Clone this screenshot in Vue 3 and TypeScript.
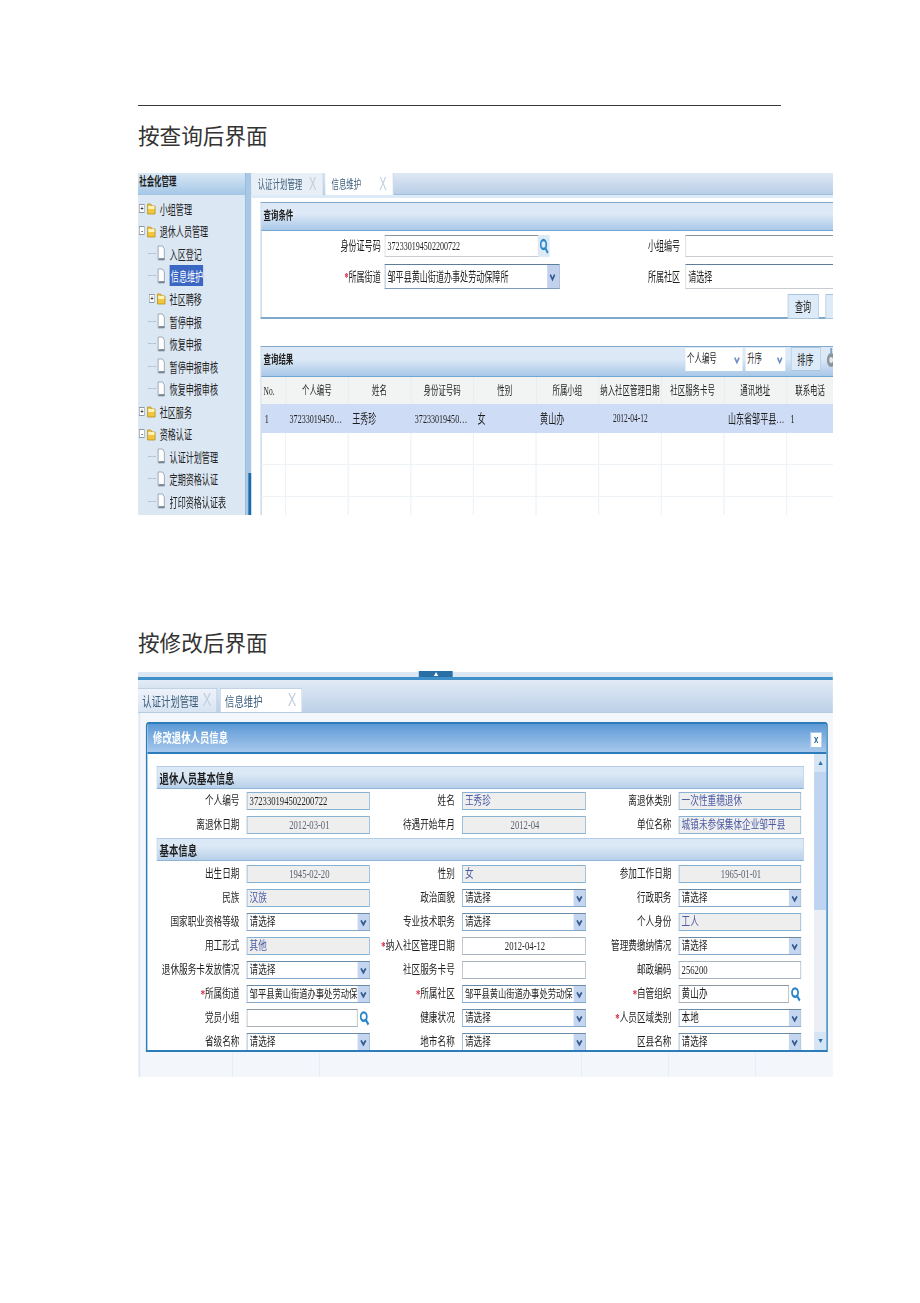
<script setup lang="ts">
type Tree = { t: string; d: number; k: 'folder' | 'page'; e?: string; sel?: boolean }
type Field = { l: string; v?: string; k: 'ro' | 'roc' | 'sel' | 'txt' | 'txc' | 'look'; req?: boolean; blue?: boolean }

const tree: Tree[] = [
  { t: '小组管理', d: 0, k: 'folder', e: '+' },
  { t: '退休人员管理', d: 0, k: 'folder', e: '-' },
  { t: '入区登记', d: 1, k: 'page' },
  { t: '信息维护', d: 1, k: 'page', sel: true },
  { t: '社区聘移', d: 1, k: 'folder', e: '+' },
  { t: '暂停申报', d: 1, k: 'page' },
  { t: '恢复申报', d: 1, k: 'page' },
  { t: '暂停申报审核', d: 1, k: 'page' },
  { t: '恢复申报审核', d: 1, k: 'page' },
  { t: '社区服务', d: 0, k: 'folder', e: '+' },
  { t: '资格认证', d: 0, k: 'folder', e: '-' },
  { t: '认证计划管理', d: 1, k: 'page' },
  { t: '定期资格认证', d: 1, k: 'page' },
  { t: '打印资格认证表', d: 1, k: 'page' }
]

const heads = ['No.', '个人编号', '姓名', '身份证号码', '性别', '所属小组', '纳入社区管理日期', '社区服务卡号', '通讯地址', '联系电话']
const row = ['1', '37233019450…', '王秀珍', '37233019450…', '女', '黄山办', '2012-04-12', '', '山东省邹平县…', '1']
const rowAlign = ['l', 'l', 'l', 'l', 'l', 'l', 'c', 'l', 'l', 'l']

const sec1: Field[] = [
  { l: '个人编号', v: '372330194502200722', k: 'ro' },
  { l: '姓名', v: '王秀珍', k: 'ro', blue: true },
  { l: '离退休类别', v: '一次性重穗退休', k: 'ro', blue: true },
  { l: '离退休日期', v: '2012-03-01', k: 'roc' },
  { l: '待遇开始年月', v: '2012-04', k: 'roc' },
  { l: '单位名称', v: '城镇未参保集体企业邹平县', k: 'ro', blue: true }
]
const pick = '请选择'
const street = '邹平县黄山街道办事处劳动保'
const sec2: Field[] = [
  { l: '出生日期', v: '1945-02-20', k: 'roc' },
  { l: '性别', v: '女', k: 'ro', blue: true },
  { l: '参加工作日期', v: '1965-01-01', k: 'roc' },
  { l: '民族', v: '汉族', k: 'ro', blue: true },
  { l: '政治面貌', v: pick, k: 'sel' },
  { l: '行政职务', v: pick, k: 'sel' },
  { l: '国家职业资格等级', v: pick, k: 'sel' },
  { l: '专业技术职务', v: pick, k: 'sel' },
  { l: '个人身份', v: '工人', k: 'ro', blue: true },
  { l: '用工形式', v: '其他', k: 'ro', blue: true },
  { l: '纳入社区管理日期', v: '2012-04-12', k: 'txc', req: true },
  { l: '管理费缴纳情况', v: pick, k: 'sel' },
  { l: '退休服务卡发放情况', v: pick, k: 'sel' },
  { l: '社区服务卡号', v: '', k: 'txt' },
  { l: '邮政编码', v: '256200', k: 'txt' },
  { l: '所属街道', v: street, k: 'sel', req: true },
  { l: '所属社区', v: street, k: 'sel', req: true },
  { l: '自管组织', v: '黄山办', k: 'look', req: true },
  { l: '党员小组', v: '', k: 'look' },
  { l: '健康状况', v: pick, k: 'sel' },
  { l: '人员区域类别', v: '本地', k: 'sel', req: true },
  { l: '省级名称', v: pick, k: 'sel' },
  { l: '地市名称', v: pick, k: 'sel' },
  { l: '区县名称', v: pick, k: 'sel' }
]
const sections: { title: string; fields: Field[] }[] = [
  { title: '退休人员基本信息', fields: sec1 },
  { title: '基本信息', fields: sec2 }
]
</script>

<template>
  <div class="page">
    <div class="rule"></div>
    <h2 class="h h1">按查询后界面</h2>

    <section class="shot s1">
      <div class="canvas c1">
        <aside class="side">
          <div class="side-head">社会化管理</div>
          <div class="tree">
            <div v-for="n in tree" :key="n.t" class="node" :class="{ deep: n.d === 1 }">
              <span class="exp">
                <i v-if="n.e" class="box">{{ n.e }}</i>
                <i v-else class="dash"></i>
              </span>
              <svg class="ico" viewBox="0 0 16 16">
                <template v-if="n.k === 'folder'">
                  <path d="M2 4h5l2 2h5v8H2z" fill="#f1c63c" stroke="#b98f1e" />
                  <path d="M3 6h10v3H3z" fill="#fff3b8" />
                </template>
                <template v-else>
                  <path d="M3 1h7l3 3v11H3z" fill="#fff" stroke="#8d9aa8" />
                  <path d="M4 14h9" stroke="#5c6b7a" stroke-width="1.6" />
                </template>
              </svg>
              <span class="ntext" :class="{ sel: n.sel }">{{ n.t }}</span>
            </div>
          </div>
        </aside>
        <div class="split"><i class="split-dark"></i></div>
        <main class="main">
          <div class="tabs tabs1">
            <div class="tab off">认证计划管理<b>X</b></div>
            <div class="tab on">信息维护<b>X</b></div>
          </div>
          <div class="panel query">
            <div class="phead">查询条件</div>
            <div class="qform">
              <label>身份证号码</label>
              <div class="qlook">
                <div class="inp q">372330194502200722</div>
                <span class="lens-box">
                  <svg class="lens" viewBox="0 0 16 16"><circle cx="7" cy="6.5" r="4.5" fill="none" stroke="#2a86c8" stroke-width="2.6" /><path d="M10 10l4 5" stroke="#2a86c8" stroke-width="2.8" /></svg>
                </span>
              </div>
              <label>小组编号</label>
              <div class="inp q"></div>
              <label class="tall"><em>*</em>所属街道</label>
              <div class="inp q tall sel1">
                <span>邹平县黄山街道办事处劳动保障所</span>
                <i class="arrow"><svg viewBox="0 0 10 10"><path d="M2 3l3 4 3-4" fill="none" stroke="#345a92" stroke-width="2" /></svg></i>
              </div>
              <label class="tall">所属社区</label>
              <div class="inp q tall">请选择</div>
            </div>
            <div class="qbtns">
              <div class="btn">查询</div>
              <div class="btn"></div>
            </div>
          </div>

          <div class="panel result">
            <div class="phead rhead">
              <span class="rtitle">查询结果</span>
              <div class="mini w1">个人编号<i class="marrow"><svg viewBox="0 0 10 10"><path d="M2 3l3 4 3-4" fill="none" stroke="#6f8fc4" stroke-width="2" /></svg></i></div>
              <div class="mini w2">升序<i class="marrow"><svg viewBox="0 0 10 10"><path d="M2 3l3 4 3-4" fill="none" stroke="#6f8fc4" stroke-width="2" /></svg></i></div>
              <div class="btn sort">排序</div>
              <svg class="gear" viewBox="0 0 16 22"><circle cx="8" cy="13" r="7" fill="#8c949c" /><circle cx="8" cy="13" r="3" fill="#e4e8ec" /><path d="M8 1v6" stroke="#7fa4c8" stroke-width="3" /></svg>
            </div>
            <div class="grid ghead">
              <div v-for="h in heads" :key="h" class="gc hc">{{ h }}</div>
            </div>
            <div class="grid grow hl">
              <div v-for="(c, i) in row" :key="i" class="gc" :class="rowAlign[i]">{{ c }}</div>
            </div>
            <div v-for="r in 3" :key="r" class="grid grow blank">
              <div v-for="h in heads" :key="h" class="gc"></div>
            </div>
          </div>
        </main>
      </div>
    </section>

    <h2 class="h h2">按修改后界面</h2>

    <section class="shot s2">
      <div class="canvas c2">
        <div class="strip"><i class="handle"><b></b></i></div>
        <div class="tabs tabs2">
          <div class="tab off">认证计划管理<b>X</b></div>
          <div class="tab on">信息维护<b>X</b></div>
        </div>
        <div class="stage">
          <div class="dialog">
            <div class="dhead">
              <span>修改退休人员信息</span>
              <i class="close">x</i>
            </div>
            <div class="dbody">
              <div class="dscroll">
                <template v-for="s in sections" :key="s.title">
                  <div class="sect">{{ s.title }}</div>
                  <div class="fgrid">
                    <template v-for="f in s.fields" :key="f.l">
                      <label class="flab"><em v-if="f.req">*</em>{{ f.l }}</label>
                      <div v-if="f.k === 'look'" class="flook">
                        <div class="fld txt">{{ f.v }}</div>
                        <svg class="flens" viewBox="0 0 16 16"><circle cx="7" cy="6.5" r="4.5" fill="none" stroke="#2a86c8" stroke-width="2.6" /><path d="M10 10l4 5" stroke="#2a86c8" stroke-width="2.8" /></svg>
                      </div>
                      <div v-else class="fld" :class="[f.k, { blue: f.blue, long: f.v === street }]">
                        <span>{{ f.v }}</span>
                        <i v-if="f.k === 'sel'" class="farrow"><svg viewBox="0 0 10 10"><path d="M2 3l3 4 3-4" fill="none" stroke="#345a92" stroke-width="2" /></svg></i>
                      </div>
                    </template>
                  </div>
                </template>
              </div>
              <div class="sbar">
                <i class="sbtn"><svg viewBox="0 0 10 10"><path d="M5 3l3 4H2z" fill="#2a6fa8" /></svg></i>
                <i class="thumb"></i>
                <i class="strack"></i>
                <i class="sbtn"><svg viewBox="0 0 10 10"><path d="M5 7L2 3h6z" fill="#2a6fa8" /></svg></i>
              </div>
            </div>
          </div>
          <div class="under"></div>
        </div>
      </div>
    </section>
  </div>
</template>

<style>
html, body { margin: 0; background: #fff; }
</style>

<style scoped>
.page {
  width: 920px;
  min-height: 1303px;
  box-sizing: border-box;
  padding: 105px 0 0 138px;
  background: #fff;
  font-family: "Liberation Serif", "Noto Sans CJK SC", serif;
}
.rule { width: 643px; height: 1px; background: #3a3a3a; }
.h {
  margin: 0;
  font: 400 21.6px/26px "Liberation Serif", "Noto Sans CJK SC", serif;
  color: #333;
}
.h1 { margin: 18px 0 23px; }
.h2 { margin: 116px 0 14px; }

.shot { width: 695px; overflow: hidden; filter: blur(0.6px); color: #1e1e1e; }
.s1 { height: 342px; }
.s2 { height: 406px; }
.canvas { transform-origin: 0 0; font-size: 12px; }
.c1 { width: 1121px; height: 342px; display: flex; transform: scaleX(0.62); }
.c2 { width: 965px; height: 406px; transform: scaleX(0.72); background: #f3f6fb; }

/* sidebar */
.side { width: 173px; flex: none; background: #dbe7f3; }
.side-head {
  height: 22px;
  line-height: 18px;
  padding-left: 2px;
  font-weight: 700;
  background: linear-gradient(#d8e7f5, #a3c6e6);
}
.tree { padding-top: 2px; }
.node { height: 22.55px; display: flex; align-items: center; font-size: 13px; }
.node.deep { padding-left: 16px; }
.exp { width: 13px; display: flex; justify-content: center; flex: none; }
.box {
  width: 9px; height: 9px; box-sizing: border-box;
  border: 1px solid #8a9aaa; background: #fff;
  font: 700 8px/7px "Liberation Sans", sans-serif;
  text-align: center; color: #333;
}
.dash { width: 13px; border-top: 1px dotted #8a9aaa; }
.ico { width: 17px; height: 16px; flex: none; }
.ntext { margin-left: 5px; padding: 1px 3px 1px 0; white-space: nowrap; color: #222; }
.ntext.sel { background: #3a66c4; color: #fff; padding-left: 2px; }

.split { width: 10px; flex: none; background: #a8c8e6; display: flex; flex-direction: column; justify-content: flex-end; align-items: flex-end; border-left: 1px solid #7fb0d8; box-sizing: border-box; }
.split-dark { width: 5px; height: 42px; background: #1f6aa6; }

.main { flex: 1; min-width: 0; background: #fff; }
.tabs { display: flex; align-items: flex-end; white-space: nowrap; }
.tabs1 { height: 22px; background: linear-gradient(#dfe8f4, #b7cde6); border-bottom: 3px solid #dcebf7; box-shadow: inset 0 -1px 0 #9cc0e0; }
.tab { box-sizing: border-box; display: flex; align-items: center; justify-content: space-between; color: #3d5f7c; }
.tab b { font: 400 18px "Liberation Sans", sans-serif; color: #c0cfdd; }
.tabs1 .tab { height: 22px; padding: 0 10px; }
.tabs1 .off { width: 116px; background: #e8eff7; border-right: 1px solid #b0c6dc; }
.tabs1 .on { width: 110px; margin-left: 3px; background: #fff; border-right: 1px solid #b0c6dc; }

.panel { margin-left: 14.5px; border: 1px solid #7ea9cc; border-width: 1px 0 2px 1px; background: #fff; }
.query { margin-top: 4px; height: 114px; }
.phead { height: 27px; line-height: 26px; padding-left: 4px; font-weight: 700; background: linear-gradient(#dde9f6 40%, #a9c8e8); border-bottom: 1px solid #6fa6d2; white-space: nowrap; }
.qform { padding-top: 4px; display: grid; grid-template-columns: 199px 282px 203px 239px; grid-template-rows: 22px 25px; row-gap: 7px; width: 938px; }
.qform label { text-align: right; padding-right: 6px; line-height: 22px; font-size: 13px; }
.qform label:nth-child(3), .qform label:nth-child(7) { padding-right: 8px; }
.qform label.tall { line-height: 25px; }
em { color: #d81e3c; font-style: normal; font-weight: 700; }
.qlook { display: flex; }
.inp { border: 1px solid #c8ccd0; border-top-color: #8b949c; padding-left: 4px; line-height: 20px; box-sizing: border-box; background: #fff; white-space: nowrap; overflow: hidden; font-size: 13px; }
.qlook .inp { width: 248px; flex: none; }
.lens-box { width: 18px; height: 22px; background: #dcebf6; display: flex; align-items: center; justify-content: center; }
.lens { width: 16px; height: 16px; }
.inp.tall { line-height: 23px; border-top-color: #5c7d9c; }
.sel1 { display: flex; justify-content: space-between; padding-right: 0; border-color: #7e9cbc; }
.arrow { width: 19px; background: #c2d2ee; display: flex; align-items: center; flex: none; }
.arrow svg { width: 17px; height: 12px; }
.qbtns { padding: 5px 0 0 849px; display: flex; gap: 11px; }
.btn { width: 50px; height: 25px; box-sizing: border-box; text-align: center; line-height: 24px; font-size: 13px; background: #dcebf7; border: 1px solid #a9c6de; flex: none; }

.result { margin-top: 27px; }
.rhead { height: 29px; display: flex; align-items: flex-start; padding-left: 4px; gap: 5px; }
.rtitle { width: 675px; flex: none; }
.mini { height: 23px; margin-top: 1px; line-height: 22px; background: #fff; font-weight: 400; padding-left: 3px; box-sizing: border-box; display: flex; justify-content: space-between; flex: none; }
.w1 { width: 92px; }
.w2 { width: 64px; }
.marrow { width: 18px; display: flex; align-items: center; }
.marrow svg { width: 18px; height: 12px; }
.sort { width: 48px; height: 24px; margin-left: 4px; font-weight: 400; }
.gear { width: 16px; height: 22px; flex: none; margin-left: 4px; }

.grid { display: grid; grid-template-columns: 40px repeat(8, 101px) 76px; width: 924px; }
.ghead { height: 27px; background: #f2f4f4; }
.hc { text-align: center; line-height: 27px; border-right: 1px solid #e4e8ec; font-size: 12px; }
.hc:first-child { text-align: left; padding-left: 4px; }
.grow { height: 29px; }
.hl { background: #cfdcf5; }
.gc { white-space: nowrap; overflow: hidden; line-height: 29px; box-sizing: border-box; }
.gc.l { padding-left: 6px; font-size: 13px; }
.gc.c { text-align: center; }
.blank { height: 31px; border-bottom: 1px solid #eef3f8; }
.blank .gc { border-right: 2px solid #eef3f8; }

/* second shot */
.strip { height: 9px; border-bottom: 3px solid #3f90c8; background: linear-gradient(#fff 25%, #dbe8f3 25%); box-sizing: border-box; padding-left: 390px; }
.handle { width: 47px; height: 6px; background: #2a6ea6; display: flex; justify-content: center; }
.handle b { width: 0; height: 0; border: 3px solid transparent; border-top: 0; border-bottom: 4px solid #fff; margin-top: 1px; }
.tabs2 { height: 33px; background: linear-gradient(#e2ebf6, #bcd0e8); border-bottom: 1px solid #b5cbe2; box-sizing: border-box; }
.tabs2 .tab { height: 24px; font-size: 13px; padding: 0 7px 0 6px; }
.tabs2 .off { width: 110px; background: linear-gradient(#eef3fa, #d8e4f2); border: 1px solid #c0d2e4; border-bottom: 0; border-left: 0; }
.tabs2 .on { width: 114px; margin-left: 4px; background: #fff; border: 1px solid #c0d2e4; border-bottom: 0; }
.stage { padding: 9px 7px 0 8px; height: 364px; box-sizing: border-box; border-left: 2px solid #dfe8f2; margin-left: 1px; }
.dialog { width: 947px; height: 330px; box-sizing: border-box; border: 2px solid #2b7cb8; border-radius: 4px 4px 0 0; background: #fff; display: flex; flex-direction: column; overflow: hidden; }
.dhead { height: 30px; flex: none; box-sizing: border-box; background: linear-gradient(#5d9ad6, #a7c8ec); border-bottom: 2px solid #2b7cb8; color: #fff; font-weight: 700; font-size: 13px; line-height: 28px; padding-left: 8px; display: flex; justify-content: space-between; }
.close { width: 14px; height: 14px; margin: 8px 6px 0 0; background: #fff; border: 1px solid #a8c4de; color: #23659a; font: 700 11px/12px "Liberation Sans", sans-serif; text-align: center; }
.dbody { flex: 1; min-height: 0; display: flex; }
.dscroll { flex: 1; min-width: 0; padding: 12px 0 0 13px; overflow: hidden; }
.sect { width: 899px; height: 23px; box-sizing: border-box; line-height: 24px; padding-left: 3px; font-weight: 700; font-size: 13px; background: linear-gradient(#dbe8f5 35%, #b6d0ea); border: 1px solid #b4cde4; border-bottom-color: #8fb4d6; }
.fgrid { display: grid; width: 895px; grid-template-columns: 125px 171px 128px 172px 129px 170px; grid-auto-rows: 18px; row-gap: 6px; padding: 3px 0 4px; }
.fgrid:last-child { padding-top: 4px; }
.flab { text-align: right; padding-right: 10px; line-height: 18px; white-space: nowrap; font-size: 12px; }
.fld { box-sizing: border-box; height: 18px; line-height: 16px; border: 1px solid #a8b4c0; padding-left: 3px; white-space: nowrap; overflow: hidden; background: #fff; display: flex; justify-content: space-between; }
.long { font-size: 11.5px; }
.ro, .roc { background: #eeeeee; border-color: #86b2d4; }
.roc { justify-content: center; color: #5a6270; }
.blue { color: #4c5ba4; }
.txc { justify-content: center; }
.sel { border-color: #85a8c8; border-top-color: #6b8aa8; padding-right: 0; }
.sel span { overflow: hidden; }
.farrow { width: 16px; flex: none; background: #c4d6f0; display: flex; align-items: center; }
.farrow svg { width: 16px; height: 11px; }
.flook { display: flex; align-items: center; }
.flook .fld { flex: 1; min-width: 0; border-color: #aab2ba; border-top-color: #8a96a2; }
.flens { width: 15px; height: 16px; flex: none; margin-left: 2px; }
.sbar { width: 17px; flex: none; display: flex; flex-direction: column; background: #eaeff5; }
.sbtn { height: 18px; flex: none; background: #d6e5f5; display: flex; align-items: center; justify-content: center; }
.sbtn svg { width: 14px; height: 10px; }
.thumb { height: 138px; flex: none; background: #bed4f0; }
.strack { flex: 1; }
.under { height: 25px; width: 947px; background: repeating-linear-gradient(90deg, #f3f6fb 0 120px, #e9eef5 120px 121px); }
</style>
